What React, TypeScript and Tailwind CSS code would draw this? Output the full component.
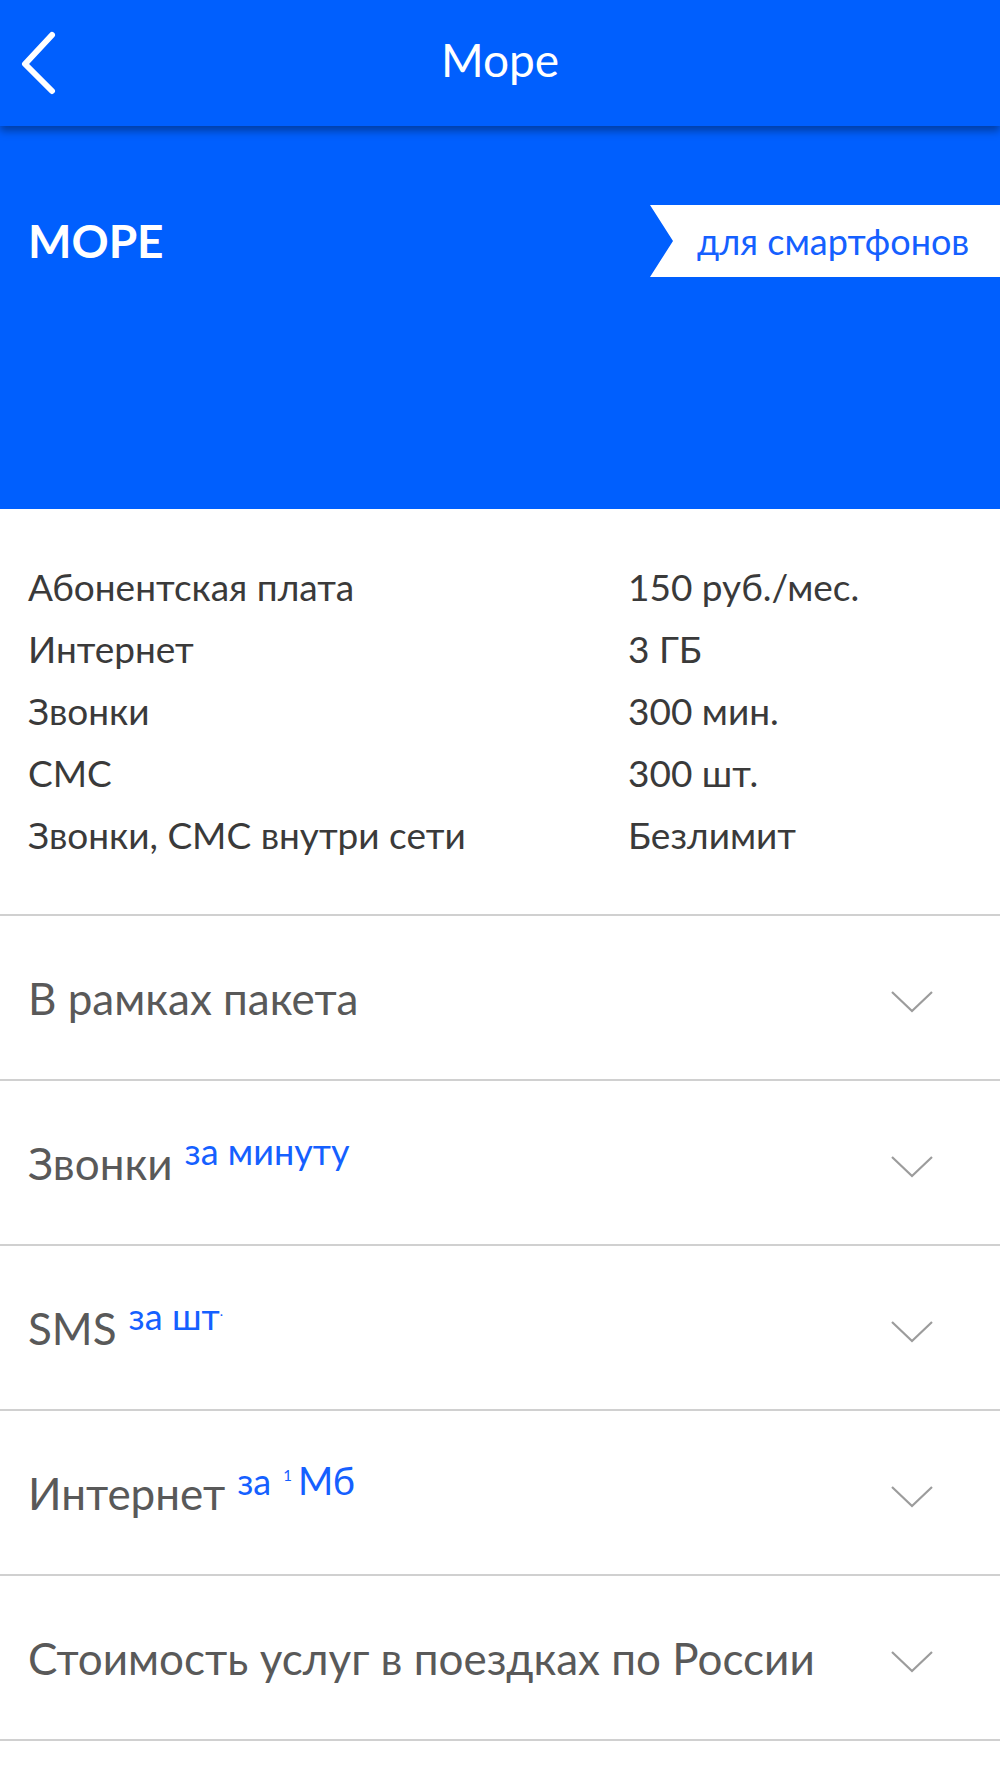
import type { ReactNode } from 'react'

const specs = [
  ['Абонентская плата', '150 руб./мес.'],
  ['Интернет', '3 ГБ'],
  ['Звонки', '300 мин.'],
  ['СМС', '300 шт.'],
  ['Звонки, СМС внутри сети', 'Безлимит'],
]

function BackIcon() {
  return (
    <svg width="40" height="64" viewBox="0 0 40 64" fill="none" className="block">
      <path d="M31 4 L4 33 L31 60" stroke="white" strokeWidth="6" strokeLinecap="round" strokeLinejoin="round" />
    </svg>
  )
}

function Chevron() {
  return (
    <svg width="42" height="22" viewBox="0 0 42 22" fill="none" className="block">
      <path d="M1 1 L21 20 L41 1" stroke="#9c9c9c" strokeWidth="2.2" />
    </svg>
  )
}

/** Строка аккордеона: заголовок + необязательная синяя приписка сверху */
function AccordionRow({ title, note }: { title: string; note?: ReactNode }) {
  return (
    <div className="flex h-[165px] items-center justify-between border-b-2 border-[#d0d0d0] pl-7 pr-[67px]">
      <div className="flex items-baseline text-[44px] text-[#595959]">
        <span>{title}</span>
        {note && <span className="relative -top-[15px] ml-3 flex items-baseline text-[#1560ff]">{note}</span>}
      </div>
      <div className="pt-2">
        <Chevron />
      </div>
    </div>
  )
}

export default function App() {
  return (
    <div className="min-h-[1778px] w-[1000px] bg-white font-[Lato,Noto_Sans,sans-serif]">
      <header className="relative z-10 flex h-[126px] items-center bg-[#005ffe] shadow-[0_5px_8px_rgba(0,0,0,0.35)]">
        <div className="pl-[21px]">
          <BackIcon />
        </div>
        <h1 className="absolute left-1/2 top-[28px] -translate-x-1/2 text-[46px] leading-[64px] text-white">Море</h1>
      </header>

      <section className="h-[383px] bg-[#005ffe] pt-[79px]">
        <div className="flex items-center justify-between">
          <h2 className="pl-7 text-[46px] font-bold leading-none text-white">МОРЕ</h2>
          <div className="flex h-[72px] w-[350px] items-center bg-white pl-[47px] text-[36px] text-[#1560ff] [clip-path:polygon(0_0,100%_0,100%_100%,0_100%,23px_50%)]">
            для смартфонов
          </div>
        </div>
      </section>

      <section className="border-b-2 border-[#d0d0d0] px-7 pb-[48px] pt-[47px]">
        <div className="grid grid-cols-[600px_1fr] text-[37px] leading-[62px] text-[#3a3a3a]">
          {specs.map(([label, value]) => (
            <div key={label} className="contents">
              <span>{label}</span>
              <span>{value}</span>
            </div>
          ))}
        </div>
      </section>

      <AccordionRow title="В рамках пакета" />
      <AccordionRow title="Звонки" note={<span className="text-[36px]">за минуту</span>} />
      <AccordionRow
        title="SMS"
        note={
          <span className="text-[36px]">
            за шт<span className="relative -top-[14px] text-[14px]">.</span>
          </span>
        }
      />
      <AccordionRow
        title="Интернет"
        note={
          <>
            <span className="text-[36px]">за</span>
            <span className="relative -top-[14px] ml-3 text-[15px]">1</span>
            <span className="ml-1.5 text-[38px]">Мб</span>
          </>
        }
      />
      <AccordionRow title="Стоимость услуг в поездках по России" />
    </div>
  )
}
